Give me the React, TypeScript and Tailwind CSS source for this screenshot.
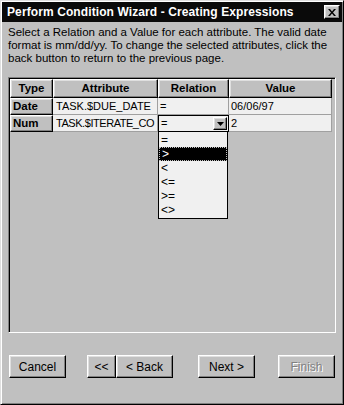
import React from 'react';

const raised =
  'border border-t-white border-l-white border-r-black border-b-black shadow-[inset_-1px_-1px_0_#808080,inset_1px_1px_0_#dfdfdf]';

const columns = [
  { label: 'Type', w: 'w-[43px]' },
  { label: 'Attribute', w: 'w-[105px]' },
  { label: 'Relation', w: 'w-[71px]' },
  { label: 'Value', w: 'w-[103px]' },
];

const Btn = ({ label, w, disabled }: { label: string; w: string; disabled?: boolean }) => (
  <div className={`${w} h-[23px] ${raised} bg-[#c0c0c0] flex items-center justify-center text-[12px] ${disabled ? 'text-[#808080] [text-shadow:1px_1px_0_#ffffff]' : 'text-black'}`}>
    {label}
  </div>
);

export default function App() {
  const relations = ['=', '>', '<', '<=', '>=', '<>'];

  return (
    <div className="w-[344px] h-[405px] bg-[#c0c0c0] border border-t-[#dfdfdf] border-l-[#dfdfdf] border-r-black border-b-black shadow-[inset_1px_1px_0_#ffffff,inset_-1px_-1px_0_#808080] flex flex-col font-['Liberation_Sans',Arial,sans-serif] text-black relative overflow-hidden">
      {/* title bar */}
      <div className="h-[20px] bg-[#0a0a0a] mx-[1px] mt-[1px] flex items-center justify-between pl-[5px] pr-[2px]">
        <span className="text-white font-bold text-[12px] tracking-[0.1px]">Perform Condition Wizard - Creating Expressions</span>
        <div className={`w-[16px] h-[14px] bg-[#c0c0c0] ${raised} flex items-center justify-center`}>
          <svg width="8" height="7" viewBox="0 0 8 7">
            <path d="M0 0h2l2 2.5L6 0h2L5 3.5 8 7H6L4 4.5 2 7H0l3-3.5z" fill="black" />
          </svg>
        </div>
      </div>

      {/* description */}
      <p className="px-[7px] pt-[4px] text-[11.5px] leading-[13px]">
        Select a Relation and a Value for each attribute. The valid date format is mm/dd/yy. To change the selected attributes, click the back button to return to the previous page.
      </p>

      {/* grid */}
      <div className="mx-[7px] mt-[12px] h-[256px] border border-t-[#808080] border-l-[#808080] border-r-white border-b-white shadow-[inset_1px_1px_0_#000000] pl-[1px] pt-[1px]">
        <div className="flex">
          {columns.map(c => (
            <div key={c.label} className={`${c.w} h-[19px] ${raised} bg-[#c0c0c0] flex items-center justify-center text-[11.5px] font-bold`}>
              {c.label}
            </div>
          ))}
        </div>
        <div className="flex">
          <div className={`w-[43px] h-[17px] ${raised} bg-[#c0c0c0] flex items-center pl-[2px] text-[11.5px] font-bold`}>Date</div>
          <div className="w-[105px] h-[17px] bg-[#f0f0f0] border-r border-b border-[#a0a0a0] flex items-center pl-[3px] text-[11px]">TASK.$DUE_DATE</div>
          <div className="w-[71px] h-[17px] bg-[#f0f0f0] border-r border-b border-[#a0a0a0] flex items-center pl-[2px] text-[11px]">=</div>
          <div className="w-[103px] h-[17px] bg-[#f0f0f0] border-r border-b border-[#a0a0a0] flex items-center pl-[2px] text-[11px]">06/06/97</div>
        </div>
        <div className="flex">
          <div className={`w-[43px] h-[17px] ${raised} bg-[#c0c0c0] flex items-center pl-[2px] text-[11.5px] font-bold`}>Num</div>
          <div className="w-[105px] h-[17px] bg-[#f0f0f0] border-r border-b border-[#a0a0a0] flex items-center pl-[3px] text-[11px] tracking-[-0.45px] whitespace-nowrap">TASK.$ITERATE_CO</div>
          <div className="w-[71px] h-[17px] bg-[#f0f0f0] border border-black flex items-center justify-between pl-[2px] pr-px text-[11px]">
            <span>=</span>
            <div className={`w-[14px] h-[13px] ${raised} bg-[#c0c0c0] flex items-center justify-center`}>
              <svg width="7" height="4" viewBox="0 0 7 4"><path d="M0 0h7L3.5 4z" fill="black" /></svg>
            </div>
          </div>
          <div className="w-[103px] h-[17px] bg-[#f0f0f0] border-r border-b border-[#a0a0a0] flex items-center pl-[2px] text-[11px]">2</div>
        </div>
      </div>

      {/* open dropdown list */}
      <div className="absolute left-[157px] top-[130px] w-[70px] bg-[#f0f0f0] border border-black pt-px pb-[1px]">
        {relations.map(r => (
          <div
            key={r}
            className={`h-[14px] flex items-center pl-[2px] text-[12px] leading-none ${r === '>' ? 'bg-black text-white border border-dotted border-[#c0c0c0] pl-[1px]' : ''}`}
          >
            {r}
          </div>
        ))}
      </div>

      {/* buttons */}
      <div className="flex items-center pl-[8px] mt-[22px]">
        <Btn label="Cancel" w="w-[57px]" />
        <div className="ml-[21px] flex">
          <Btn label="<<" w="w-[29px]" />
          <Btn label="< Back" w="w-[57px]" />
        </div>
        <div className="ml-[25px]">
          <Btn label="Next >" w="w-[57px]" />
        </div>
        <div className="ml-[23px]">
          <Btn label="Finish" w="w-[57px]" disabled />
        </div>
      </div>
    </div>
  );
}
